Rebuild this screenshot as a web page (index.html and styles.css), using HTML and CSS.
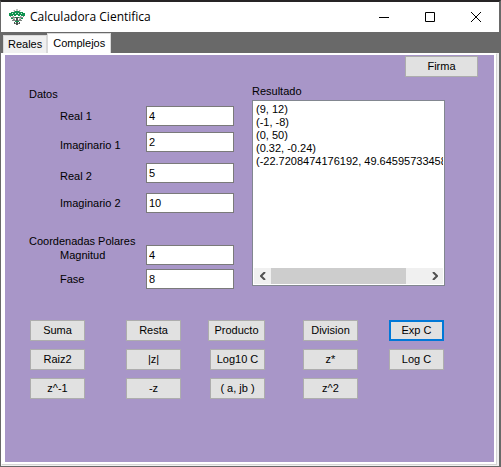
FILE: index.html
```html
<!DOCTYPE html>
<html lang="es">
<head>
<meta charset="utf-8">
<title>Calculadora Cientifica</title>
<link rel="stylesheet" href="styles.css">
</head>
<body>
<div class="window">
  <header class="titlebar">
    <svg class="logo" viewBox="0 0 16 16" aria-hidden="true">
      <path d="M8 0v4M5 1l1 3M11 1l-1 3M1 7l4 4M15 7l-4 4M4 7l2 5M12 7l-2 5M2 8.500h12M3 11.500h10M5 14.500h6" fill="none" stroke="#7c837f" stroke-width="1"/>
      <path d="M7 8h2v8H7zM5 13h1v2H5zM10 13h1v2h-1z" fill="#4b5450"/>
      <path d="M0 4h2V3h4V2h4v1h4v1h2v3h-4V6h-1v1H9V6H7v1H5V6H4v1H0z" fill="#0f9350"/>
      <path d="M2 9h2v1H2zM12 9h2v1h-2zM6 8h1v1H6zM9 8h1v1H9zM6 12h4v1H6z" fill="#0f9350"/>
      <path d="M3 4.500h1M6 4.500h1M9 4.500h1M12 4.500h1" stroke="#d4e8dc" stroke-width="1"/>
    </svg>
    <h1 class="title">Calculadora Cientifica</h1>
    <button class="caption" aria-label="Minimizar"><svg viewBox="0 0 10 10"><path d="M0 5.5h10"/></svg></button>
    <button class="caption" aria-label="Maximizar"><svg viewBox="0 0 10 10"><path d="M.5.5h9v9h-9z"/></svg></button>
    <button class="caption" aria-label="Cerrar"><svg viewBox="0 0 10 10"><path d="M0 0l10 10M10 0L0 10"/></svg></button>
  </header>
  <nav class="tabs" role="tablist">
    <button class="tab" role="tab" aria-selected="false">Reales</button>
    <button class="tab tab-active" role="tab" aria-selected="true">Complejos</button>
  </nav>
  <main class="frame">
    <div class="page">
      <div class="top"><button class="btn btn-sign">Firma</button></div>
      <div class="columns">
        <form class="fields">
          <h2 class="group">Datos</h2>
          <div class="row"><label for="r1">Real 1</label><input id="r1" value="4"></div>
          <div class="row row-low"><label for="i1">Imaginario 1</label><input id="i1" value="2"></div>
          <div class="row row-low row-second"><label for="r2">Real 2</label><input id="r2" value="5"></div>
          <div class="row"><label for="i2">Imaginario 2</label><input id="i2" value="10"></div>
          <h2 class="group group-polar">Coordenadas Polares</h2>
          <div class="row row-polar"><label for="mag">Magnitud</label><input id="mag" value="4"></div>
          <div class="row row-polar"><label for="fase">Fase</label><input id="fase" value="8"></div>
        </form>
        <section class="result">
          <label class="group" for="res">Resultado</label>
          <div class="listbox">
            <select id="res" class="list" size="12">
              <option>(9, 12)</option>
              <option>(-1, -8)</option>
              <option>(0, 50)</option>
              <option>(0.32, -0.24)</option>
              <option>(-22.7208474176192, 49.6459573345808)</option>
            </select>
            <div class="scroll">
              <button class="arrow" aria-label="Izquierda"><svg viewBox="0 0 6 8"><path d="M5 0L1 4l4 4"/></svg></button>
              <div class="track"><div class="thumb"></div></div>
              <button class="arrow" aria-label="Derecha"><svg viewBox="0 0 6 8"><path d="M1 0l4 4-4 4"/></svg></button>
            </div>
          </div>
        </section>
      </div>
      <div class="keys">
        <button class="btn">Suma</button>
        <button class="btn">Resta</button>
        <button class="btn btn-wide">Producto</button>
        <button class="btn">Division</button>
        <button class="btn btn-focus">Exp C</button>
        <button class="btn">Raiz2</button>
        <button class="btn">|z|</button>
        <button class="btn btn-inset">Log10 C</button>
        <button class="btn">z*</button>
        <button class="btn">Log C</button>
        <button class="btn">z^-1</button>
        <button class="btn">-z</button>
        <button class="btn btn-inset">( a, jb )</button>
        <button class="btn">z^2</button>
      </div>
    </div>
  </main>
</div>
</body>
</html>
```
FILE: styles.css
```css
* { box-sizing: border-box; }

body {
  margin: 0;
  background: #696969;
  color: #000;
  font: 11px/13px "Liberation Sans", Arial, sans-serif;
}

button, input, select {
  margin: 0;
  font: inherit;
  color: inherit;
  border-radius: 0;
}

.window {
  display: flex;
  flex-direction: column;
  min-height: 100vh;
  border: 1px solid #696969;
  border-top: 2px solid #262425;
  border-right-width: 2px;
}

.titlebar {
  display: flex;
  align-items: center;
  height: 30px;
  padding-left: 8px;
  background: #fff;
}

.logo { width: 16px; height: 16px; }

.title {
  flex: 1;
  margin: 0 0 0 5px;
  font: 12px/16px "Open Sans", "Segoe UI", sans-serif;
}

.caption {
  width: 46px;
  height: 30px;
  padding: 0;
  border: 0;
  background: none;
}

.caption svg {
  display: block;
  width: 10px;
  height: 10px;
  margin: 0 auto;
  fill: none;
  stroke: #000;
}

.tabs {
  display: flex;
  align-items: flex-end;
  height: 21px;
  padding-left: 2px;
}

.tab {
  height: 18px;
  padding: 0 4px;
  border: 1px solid #d9d9d9;
  border-bottom: 0;
  background: #f0f0f0;
}

.tab-active {
  height: 20px;
  padding: 0 5px;
  background: #fff;
}

.frame {
  flex: 1;
  display: flex;
  padding: 0 3px 2px 0;
  background: #f0f0f0;
}

.page {
  flex: 1;
  border: 2px solid #fff;
  border-left-width: 4px;
  background: #a896c8;
  box-shadow: 1px 1px #d5d5d5;
}

.top {
  display: flex;
  justify-content: flex-end;
  padding: 1px 16px 0 0;
}

.btn {
  width: 55px;
  height: 21px;
  padding: 0;
  border: 1px solid #adadad;
  background: #e1e1e1;
}

.btn-sign { width: 73px; }
.btn-wide { width: 57px; }
.btn-inset { margin-left: 2px; }
.btn-focus { border: 2px solid #0078d7; }

.columns {
  display: flex;
  gap: 18px;
  padding: 8px 49px 0 24px;
}

.fields { width: 205px; }

.group {
  display: block;
  margin: 0;
  font: inherit;
}

.fields .group { padding-top: 3px; }
.fields .group-polar { padding-top: 22px; }

.row {
  display: flex;
  align-items: center;
  justify-content: space-between;
  padding-left: 31px;
  margin-top: 5px;
}

.row + .row { margin-top: 6px; }
.fields .row-second { margin-top: 11px; }
.row-second + .row { margin-top: 10px; }
.group + .row-polar { margin-top: -3px; }
.row-polar + .row-polar { margin-top: 4px; }

.row-low label { padding-top: 7px; }

.row input {
  width: 88px;
  height: 20px;
  padding: 0 2px;
  border: 1px solid #7a7a7a;
  background: #fff;
}

.result { flex: 1; min-width: 0; }

.listbox {
  margin-top: 2px;
  padding: 1px;
  border: 1px solid #828790;
  background: #fff;
}

.list {
  display: block;
  width: 100%;
  height: 166px;
  padding: 1px 0;
  border: 0;
  outline: 0;
  background: #fff;
  overflow: hidden;
  appearance: none;
}

.list option {
  min-height: 13px;
  padding: 0 2px;
  line-height: 13px;
}

.scroll {
  display: flex;
  height: 16px;
  background: #f0f0f0;
}

.arrow {
  width: 17px;
  padding: 0;
  border: 0;
  background: none;
}

.arrow svg {
  display: block;
  width: 6px;
  height: 8px;
  margin: 0 auto;
  fill: none;
  stroke: #505050;
  stroke-width: 2;
}

.track { flex: 1; }

.thumb {
  width: 87%;
  height: 100%;
  background: #cdcdcd;
}

.keys {
  display: grid;
  grid-template-columns: 96fr 82fr 95fr 86fr 55fr;
  row-gap: 8px;
  padding: 31px 50px 40px 25px;
}
```
